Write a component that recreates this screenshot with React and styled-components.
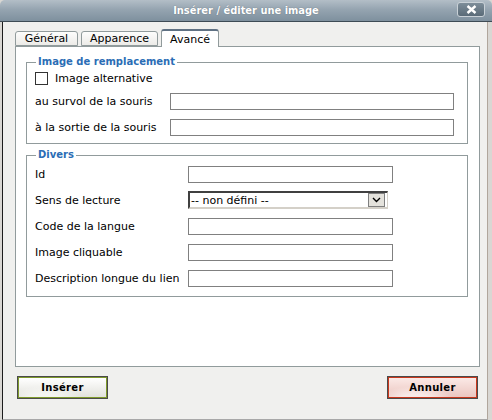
import React from "react";
import styled, { createGlobalStyle } from "styled-components";

const GlobalStyle = createGlobalStyle`
  html, body {
    margin: 0;
    padding: 0;
    background: #f0f0ee;
  }
  body {
    font-family: "DejaVu Sans", Verdana, sans-serif;
    font-size: 11px;
    color: #000;
  }
`;

const Window = styled.div`
  width: 492px;
  height: 420px;
  display: flex;
  flex-direction: column;
  background: #d9d7d3;
  box-sizing: border-box;
`;

const TitleBar = styled.div`
  height: 21px;
  display: grid;
  grid-template-columns: 1fr auto 1fr;
  align-items: center;
  background: linear-gradient(#b3bec7 0%, #95a4b0 45%, #7e909e 100%);
  border-bottom: 1px solid #3e4b55;
  border-radius: 5px 5px 0 0;
`;

const Title = styled.div`
  grid-column: 2;
  color: #fff;
  font-family: "DejaVu Sans Condensed", "DejaVu Sans", sans-serif;
  font-weight: bold;
  font-size: 11px;
  text-shadow: 0 0 1px rgba(40, 50, 60, 0.5);
`;

const CloseButton = styled.button`
  grid-column: 3;
  justify-self: end;
  align-self: start;
  margin: 2px 7px 0 0;
  width: 28px;
  height: 15px;
  padding: 0;
  display: flex;
  align-items: center;
  justify-content: center;
  border: 1px solid #c9d1d7;
  border-radius: 3px;
  background: linear-gradient(#7d8d99, #5a6b78);
  cursor: pointer;
`;

const Frame = styled.div`
  flex: 1;
  display: flex;
  flex-direction: column;
  margin: 0 4px 0 2px;
  padding: 7px 7px 20px 12px;
  background: #f0f0ee;
  border-left: 1px solid #1c1c1c;
  border-right: 1px solid #b0a69c;
  border-bottom: 1px solid #a8a8a8;
`;

const TabRow = styled.div`
  display: flex;
  align-items: flex-end;
  gap: 3px;
  height: 17px;
  position: relative;
  z-index: 1;
`;

const Tab = styled.div`
  box-sizing: border-box;
  height: ${(p) => (p.$active ? "18px" : "15px")};
  margin-bottom: ${(p) => (p.$active ? "-1px" : "0")};
  padding: 0 10px;
  display: flex;
  align-items: center;
  justify-content: center;
  width: ${(p) => p.$w}px;
  border: 1px solid #919b9c;
  border-bottom: ${(p) => (p.$active ? "none" : "1px solid #919b9c")};
  border-top: ${(p) => (p.$active ? "2px solid #5f7183" : "1px solid #919b9c")};
  border-radius: 3px 3px 0 0;
  background: ${(p) =>
    p.$active ? "#fff" : "linear-gradient(#fdfdfc, #ecebe8)"};
  font-size: 11px;
  padding-top: ${(p) => (p.$active ? "1px" : "0")};
`;

const Panel = styled.div`
  flex: 1;
  background: #fff;
  border: 1px solid #919b9c;
  padding-top: 9px;
`;

const Group = styled.fieldset`
  margin: ${(p) => (p.$top ? "5px" : "0")} 11px 0 10px;
  padding: 0 8px ${(p) => p.$pb}px 8px;
  border: 1px solid #919b9c;
  min-width: 0;
`;

const Legend = styled.legend`
  padding: 0 2px;
  margin-left: 1px;
  font-weight: bold;
  font-size: 10px;
  line-height: 12px;
  color: #2b6db5;
`;

const CheckRow = styled.label`
  height: 20px;
  display: flex;
  align-items: center;
  gap: 7px;
`;

const CheckBox = styled.span`
  width: 11px;
  height: 11px;
  border: 1px solid #333;
  background: #fff;
  display: inline-block;
`;

const Row = styled.div`
  height: 26px;
  display: grid;
  grid-template-columns: ${(p) => p.$label}px auto;
  align-items: center;
`;

const Label = styled.span`
  white-space: nowrap;
`;

const TextInput = styled.input`
  box-sizing: border-box;
  width: ${(p) => p.$w}px;
  height: 17px;
  margin: 0;
  border: 1px solid #808080;
  background: #fff;
  padding: 0 2px;
  font: inherit;
`;

const SelectBox = styled.div`
  box-sizing: border-box;
  width: 200px;
  height: 18px;
  display: flex;
  align-items: center;
  justify-content: space-between;
  border-top: 2px solid #404040;
  border-left: 2px solid #404040;
  border-right: 1px solid #d4d0c8;
  border-bottom: 2px solid #d4d0c8;
  background: #fff;
  padding-left: 1px;
`;

const SelectText = styled.span`
  font-size: 11px;
`;

const SelectArrow = styled.span`
  box-sizing: border-box;
  width: 17px;
  height: 14px;
  margin-right: 2px;
  display: flex;
  align-items: center;
  justify-content: center;
  border: 1px solid #7f7f7f;
  background: #e4e2dc;
`;

const Footer = styled.div`
  display: flex;
  justify-content: space-between;
  margin-top: 9px;
  padding: 0 2px;
`;

const ActionButton = styled.button`
  box-sizing: border-box;
  width: 91px;
  height: 23px;
  padding: 0;
  font-family: "DejaVu Sans", sans-serif;
  font-weight: bold;
  font-size: 10px;
  letter-spacing: 0.3px;
  color: #000;
  border: 2px solid ${(p) => p.$edge};
  outline: 1px solid #4a4a4a;
  outline-offset: -1px;
  background: radial-gradient(ellipse at 30% 120%, rgba(255, 255, 255, 0.6) 20%, transparent 45%),
    linear-gradient(${(p) => p.$top}, ${(p) => p.$bottom});
  cursor: pointer;
`;

const tabs = [
  { name: "Général", w: 63 },
  { name: "Apparence", w: 77 },
  { name: "Avancé", w: 58, active: true },
];

const divers = [
  "Id",
  "Sens de lecture",
  "Code de la langue",
  "Image cliquable",
  "Description longue du lien",
];

export default function App() {
  return (
    <>
      <GlobalStyle />
      <Window>
        <TitleBar>
          <Title>Insérer / éditer une image</Title>
          <CloseButton aria-label="Fermer">
            <svg width="11" height="9" viewBox="0 0 11 9">
              <path d="M1.5 1 L9.5 8 M9.5 1 L1.5 8" stroke="#fff" strokeWidth="2.4" />
            </svg>
          </CloseButton>
        </TitleBar>
        <Frame>
          <TabRow>
            {tabs.map((t) => (
              <Tab key={t.name} $active={t.active} $w={t.w}>
                {t.name}
              </Tab>
            ))}
          </TabRow>
          <Panel>
            <Group $pb={3}>
              <Legend>Image de remplacement</Legend>
              <CheckRow>
                <CheckBox />
                Image alternative
              </CheckRow>
              <Row $label={135}>
                <Label>au survol de la souris</Label>
                <TextInput $w={284} />
              </Row>
              <Row $label={135}>
                <Label>à la sortie de la souris</Label>
                <TextInput $w={284} />
              </Row>
            </Group>
            <Group $top $pb={5}>
              <Legend>Divers</Legend>
              {divers.map((d) => (
                <Row key={d} $label={153}>
                  <Label>{d}</Label>
                  {d === "Sens de lecture" ? (
                    <SelectBox>
                      <SelectText>-- non défini --</SelectText>
                      <SelectArrow>
                        <svg width="9" height="6" viewBox="0 0 9 6">
                          <path d="M1 1 L4.5 4.5 L8 1" fill="none" stroke="#000" strokeWidth="1.4" />
                        </svg>
                      </SelectArrow>
                    </SelectBox>
                  ) : (
                    <TextInput $w={205} />
                  )}
                </Row>
              ))}
            </Group>
          </Panel>
          <Footer>
            <ActionButton $edge="#7f9a2c" $top="#ffffff" $bottom="#e2e2dc">
              Insérer
            </ActionButton>
            <ActionButton $edge="#c8381d" $top="#fbe9e6" $bottom="#ebc6c0">
              Annuler
            </ActionButton>
          </Footer>
        </Frame>
      </Window>
    </>
  );
}
